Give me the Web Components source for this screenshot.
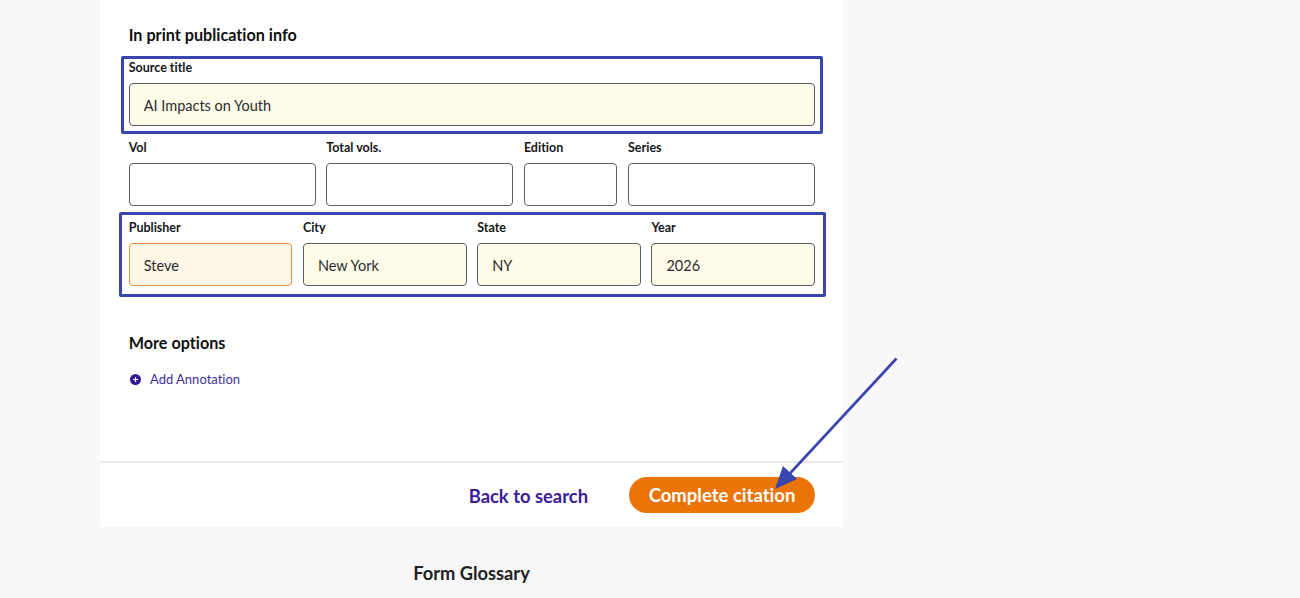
<!DOCTYPE html>
<html>
<head>
<meta charset="utf-8">
<title>Citation form</title>
<style>
html, body { margin: 0; height: 598px; overflow: hidden; background: #f8f8fa; }
body { font-family: Lato, "Liberation Sans", sans-serif; color: #111; font-variant-ligatures: none; }
</style>
</head>
<body>
<citation-page>
    <section-title>In print publication info</section-title>
    <field-row columns="1fr" top="13">
        <citation-field label="Source title">AI Impacts on Youth</citation-field>
    </field-row>
    <field-row columns="2fr 2fr 1fr 2fr" top="13">
        <citation-field label="Vol"></citation-field>
        <citation-field label="Total vols."></citation-field>
        <citation-field label="Edition"></citation-field>
        <citation-field label="Series"></citation-field>
    </field-row>
    <field-row columns="repeat(4, 1fr)" top="13">
        <citation-field label="Publisher" tint="orange">Steve</citation-field>
        <citation-field label="City">New York</citation-field>
        <citation-field label="State">NY</citation-field>
        <citation-field label="Year">2026</citation-field>
    </field-row>
    <section-title top="46">More options</section-title>
    <add-link top="16">Add Annotation</add-link>
    <form-footer slot="footer"></form-footer>
</citation-page>

<script>
class CitationPage extends HTMLElement {
    constructor(){
        super();
        this.shadowDOM=this.attachShadow({mode: "open"});
    }
    connectedCallback(){
        this.shadowDOM.innerHTML = `
        <style>
        :host { display: block; width: 1300px; height: 598px; position: relative; }
        .card {
            margin-left: 100px;
            width: 743px;
            height: 527px;
            background: #fff;
            display: flex;
            flex-direction: column;
        }
        .body { flex: 1; padding: 24px 28px 0 28.700px; display: flex; flex-direction: column; }
        .glossary {
            width: 743px;
            margin: 36px 0 0 100px;
            text-align: center;
            font-size: 18.300px;
            line-height: 20px;
            font-weight: 700;
            color: #222;
        }
        .mark { position: absolute; border: 3px solid #3a44ae; box-sizing: border-box; border-radius: 2px; }
        .one { left: 121px; top: 56px; width: 702px; height: 78px; }
        .two { left: 119px; top: 212px; width: 707px; height: 85px; }
        svg { position: absolute; left: 760px; top: 350px; }
        </style>
        <div class="card">
            <div class="body"><slot></slot></div>
            <slot name="footer"></slot>
        </div>
        <div class="glossary">Form Glossary</div>
        <div class="mark one"></div>
        <div class="mark two"></div>
        <svg width="150" height="150" viewBox="0 0 150 150">
            <path d="M136.500 8.500 L22 132" stroke="#3a44ae" stroke-width="2.600" fill="none"/>
            <path d="M15 139 L23 116 L37 129 Z" fill="#3a44ae"/>
        </svg>`;
    }
}

class SectionTitle extends HTMLElement {
    constructor(){
        super();
        this.shadowDOM=this.attachShadow({mode: "open"});
    }
    connectedCallback(){
        this.shadowDOM.innerHTML = `
        <style>
        :host {
            display: block;
            margin-top: ${this.getAttribute("top") || 0}px;
            font-size: 16.200px;
            line-height: 22px;
            font-weight: 700;
            color: #111;
        }
        </style>
        <slot></slot>`;
    }
}

class FieldRow extends HTMLElement {
    constructor(){
        super();
        this.shadowDOM=this.attachShadow({mode: "open"});
    }
    connectedCallback(){
        this.shadowDOM.innerHTML = `
        <style>
        :host {
            display: grid;
            grid-template-columns: ${this.getAttribute("columns")};
            column-gap: 10.670px;
            margin-top: ${this.getAttribute("top") || 0}px;
        }
        </style>
        <slot></slot>`;
    }
}

class CitationField extends HTMLElement {
    constructor(){
        super();
        this.shadowDOM=this.attachShadow({mode: "open"});
    }
    connectedCallback(){
        const filled = this.textContent.trim() !== "";
        const orange = this.getAttribute("tint") === "orange";
        const bg = !filled ? "#fff" : orange ? "#fff8e6" : "#fffbe9";
        const line = orange ? "#ec8f45" : "#5f5f63";
        this.shadowDOM.innerHTML = `
        <style>
        :host { display: block; min-width: 0; }
        label {
            display: block;
            height: 23px;
            padding-top: 1px;
            line-height: 16px;
            font-size: 12.500px;
            font-weight: 700;
            color: #16161a;
        }
        .box {
            box-sizing: border-box;
            height: 43px;
            border: 1px solid ${line};
            border-radius: 4px;
            background: ${bg};
            padding: 2px 14px 0;
            display: flex;
            align-items: center;
            font-size: 14.500px;
            color: #2b2b30;
        }
        </style>
        <label>${this.getAttribute("label")}</label>
        <div class="box"><slot></slot></div>`;
    }
}

class AddLink extends HTMLElement {
    constructor(){
        super();
        this.shadowDOM=this.attachShadow({mode: "open"});
    }
    connectedCallback(){
        this.shadowDOM.innerHTML = `
        <style>
        :host {
            display: flex;
            align-items: center;
            gap: 9px;
            margin-top: ${this.getAttribute("top") || 0}px;
            padding-left: 1.300px;
            height: 18px;
            font-size: 13px;
            color: #43309c;
        }
        svg { display: block; }
        </style>
        <svg width="11" height="11" viewBox="0 0 11 11">
            <circle cx="5.500" cy="5.500" r="5.500" fill="#35189a"/>
            <path d="M3 5.500 H8 M5.500 3 V8" stroke="#fff" stroke-width="1.200"/>
        </svg>
        <slot></slot>`;
    }
}

class FormFooter extends HTMLElement {
    constructor(){
        super();
        this.shadowDOM=this.attachShadow({mode: "open"});
    }
    connectedCallback(){
        this.shadowDOM.innerHTML = `
        <style>
        :host {
            display: flex;
            align-items: center;
            justify-content: flex-end;
            gap: 41px;
            height: 66px;
            box-sizing: border-box;
            border-top: 2px solid #e9e9eb;
            padding: 0 28px 1px 0;
        }
        a { font-size: 18.400px; font-weight: 700; color: #3a1c9c; text-decoration: none; padding-top: 2px; }
        button {
            width: 186px;
            height: 36px;
            border: 0;
            border-radius: 18px;
            background: #ea7405;
            color: #fff;
            font-family: inherit;
            font-variant-ligatures: none;
            font-size: 18.500px;
            font-weight: 700;
            padding: 1px 0 0;
        }
        </style>
        <a href="#">Back to search</a>
        <button type="button">Complete citation</button>`;
    }
}

customElements.define("citation-page", CitationPage);
customElements.define("section-title", SectionTitle);
customElements.define("field-row", FieldRow);
customElements.define("citation-field", CitationField);
customElements.define("add-link", AddLink);
customElements.define("form-footer", FormFooter);
</script>
</body>
</html>
